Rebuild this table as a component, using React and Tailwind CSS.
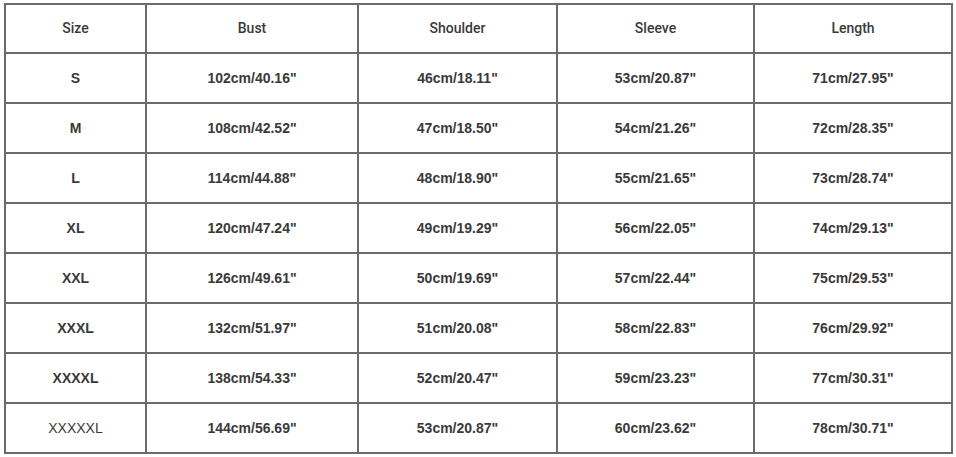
const headers = ["Size", "Bust", "Shoulder", "Sleeve", "Length"];
const rows = [
  ["S", "102cm/40.16\"", "46cm/18.11\"", "53cm/20.87\"", "71cm/27.95\""],
  ["M", "108cm/42.52\"", "47cm/18.50\"", "54cm/21.26\"", "72cm/28.35\""],
  ["L", "114cm/44.88\"", "48cm/18.90\"", "55cm/21.65\"", "73cm/28.74\""],
  ["XL", "120cm/47.24\"", "49cm/19.29\"", "56cm/22.05\"", "74cm/29.13\""],
  ["XXL", "126cm/49.61\"", "50cm/19.69\"", "57cm/22.44\"", "75cm/29.53\""],
  ["XXXL", "132cm/51.97\"", "51cm/20.08\"", "58cm/22.83\"", "76cm/29.92\""],
  ["XXXXL", "138cm/54.33\"", "52cm/20.47\"", "59cm/23.23\"", "77cm/30.31\""],
  ["XXXXXL", "144cm/56.69\"", "53cm/20.87\"", "60cm/23.62\"", "78cm/30.71\""],
];

export default function App() {
  return (
    <div className="w-[956px] h-[457px] bg-white overflow-hidden pt-[3px] pl-[4px]">
      <div
        className="w-[949px] grid grid-cols-[141px_212px_199px_197px_198px] border-l-2 border-t-2 border-[#6b6b6b] text-[#3a3a3a]"
        style={{ fontFamily: '"Liberation Sans", Arial, sans-serif' }}
      >
        {headers.map((h) => (
          <div
            key={h}
            className="h-[49px] flex items-center justify-center border-r-2 border-b-2 border-[#6b6b6b] text-[14px] font-medium"
            style={{ fontFamily: 'Roboto, "Liberation Sans", sans-serif' }}
          >
            {h}
          </div>
        ))}
        {rows.map((r) =>
          r.map((c, i) => (
            <div
              key={r[0] + i}
              className={
                "h-[50px] flex items-center justify-center border-r-2 border-b-2 border-[#6b6b6b] text-[14px] " +
                (i === 0 && r[0] === "XXXXXL" ? "font-normal" : "font-bold")
              }
            >
              {c}
            </div>
          ))
        )}
      </div>
    </div>
  );
}
